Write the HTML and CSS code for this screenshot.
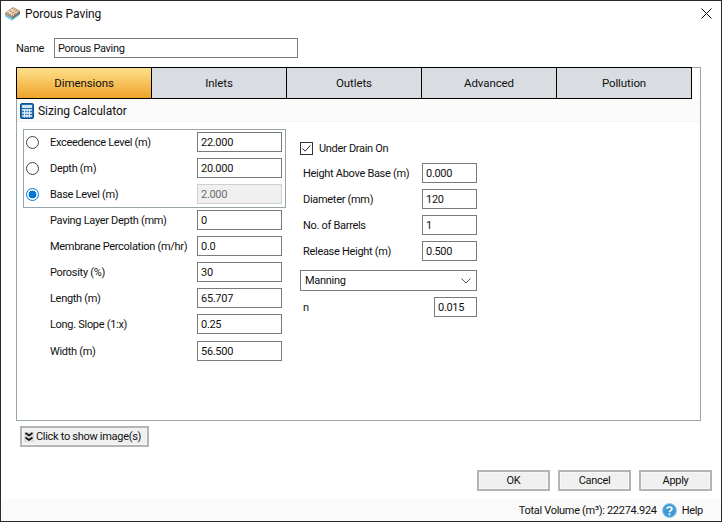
FILE: index.html
```html
<!DOCTYPE html>
<html lang="en">
<head>
<meta charset="utf-8">
<title>Porous Paving</title>
<link rel="stylesheet" href="styles.css">
</head>
<body>
<div class="window">
  <header class="titlebar">
    <svg class="app-icon" width="17" height="15" viewBox="0 0 17 15">
      <polygon points="1,8 8,12 16,6 16,9 8,14.5 1,10.5" fill="#6cc8ee"/>
      <polygon points="1,7 9,1 16,5 8,11" fill="#b98f66"/>
      <path d="M3,7 L10,2.5 M5,8 L12,3.5 M7,9.3 L14,4.8 M4,5.5 L10,9.5 M7,3.5 L13,7.5" stroke="#f1e4d2" stroke-width="1" fill="none"/>
      <polygon points="8,11 16,5 16,7.5 8,13" fill="#6f6a60"/>
      <polygon points="1,7 8,11 8,12 1,8" fill="#8a6a4a"/>
    </svg>
    <span class="title">Porous Paving</span>
    <svg class="close" width="11" height="11" viewBox="0 0 11 11"><path d="M0.5,0.5 L10.5,10.5 M10.5,0.5 L0.5,10.5" stroke="#111" stroke-width="1" fill="none"/></svg>
  </header>

  <div class="name-row">
    <span class="name-label">Name</span>
    <div class="field name-field">Porous Paving</div>
  </div>

  <section class="panel">
    <nav class="tabs">
      <div class="tab active">Dimensions</div>
      <div class="tab">Inlets</div>
      <div class="tab">Outlets</div>
      <div class="tab">Advanced</div>
      <div class="tab">Pollution</div>
    </nav>
    <div class="toolbar">
      <svg width="14" height="16" viewBox="0 0 14 16">
        <rect x="0.5" y="0.5" width="13" height="15" rx="1.5" fill="#1f6fb5" stroke="#134f87"/>
        <rect x="2" y="2" width="10" height="3" fill="#cfe4f5"/>
        <path d="M2,7 h10 M2,10 h10 M2,13 h10" stroke="#e6f1fa" stroke-width="1.4"/>
        <path d="M4.5,6 v8.5 M7,6 v8.5 M9.5,6 v8.5" stroke="#e6f1fa" stroke-width="1"/>
      </svg>
      <span>Sizing Calculator</span>
    </div>
    <div class="form">
      <div class="col-left">
        <div class="radio-box">
          <label class="row radio-row"><span class="radio"></span><span>Exceedence Level (m)</span><div class="field">22.000</div></label>
          <label class="row radio-row"><span class="radio"></span><span>Depth (m)</span><div class="field">20.000</div></label>
          <label class="row radio-row"><span class="radio checked"></span><span>Base Level (m)</span><div class="field disabled">2.000</div></label>
        </div>
        <div class="row plain-row"><span>Paving Layer Depth (mm)</span><div class="field">0</div></div>
        <div class="row plain-row"><span>Membrane Percolation (m/hr)</span><div class="field">0.0</div></div>
        <div class="row plain-row"><span>Porosity (%)</span><div class="field">30</div></div>
        <div class="row plain-row"><span>Length (m)</span><div class="field">65.707</div></div>
        <div class="row plain-row"><span>Long. Slope (1:x)</span><div class="field">0.25</div></div>
        <div class="row plain-row last"><span>Width (m)</span><div class="field">56.500</div></div>
      </div>
      <div class="col-right">
        <label class="check-row">
          <svg class="check" width="13" height="13" viewBox="0 0 13 13"><rect x="0.5" y="0.5" width="12" height="12" fill="#fff" stroke="#333"/><path d="M2.5,6.5 L5.2,9.2 L10.5,3.2" stroke="#333" stroke-width="1" fill="none"/></svg>
          <span>Under Drain On</span>
        </label>
        <div class="drain-row"><span>Height Above Base (m)</span><div class="field">0.000</div></div>
        <div class="drain-row"><span>Diameter (mm)</span><div class="field">120</div></div>
        <div class="drain-row"><span>No. of Barrels</span><div class="field">1</div></div>
        <div class="drain-row"><span>Release Height (m)</span><div class="field">0.500</div></div>
        <div class="select">
          <span>Manning</span>
          <svg width="10" height="6" viewBox="0 0 10 6"><path d="M0.5,0.5 L5,5 L9.5,0.5" stroke="#555" stroke-width="1" fill="none"/></svg>
        </div>
        <div class="n-row"><span>n</span><div class="field">0.015</div></div>
      </div>
    </div>
  </section>

  <div class="images-row">
    <button class="btn images-btn" type="button">
      <svg width="10" height="10" viewBox="0 0 10 10"><rect width="10" height="10" fill="#dcdcdc"/><path d="M1.5,1 L5,3.5 L8.5,1 M1.5,5.5 L5,8 L8.5,5.5" stroke="#111" stroke-width="1.7" fill="none"/></svg>
      <span>Click to show image(s)</span>
    </button>
  </div>

  <div class="actions">
    <button class="btn action" type="button">OK</button>
    <button class="btn action" type="button">Cancel</button>
    <button class="btn action" type="button">Apply</button>
  </div>

  <footer class="statusbar">
    <span>Total Volume (m³): 22274.924</span>
    <svg width="15" height="15" viewBox="0 0 15 15">
      <circle cx="7.5" cy="7.5" r="7" fill="#3f9bd6" stroke="#a5c9e4"/>
      <path d="M5,5.8 C5,3.4 10,3.4 10,5.8 C10,7.6 7.5,7.4 7.5,9.2" stroke="#fff" stroke-width="1.7" fill="none"/>
      <circle cx="7.5" cy="11.3" r="1" fill="#fff"/>
    </svg>
    <span>Help</span>
  </footer>
</div>
</body>
</html>
```
FILE: styles.css
```css
* { box-sizing: border-box; }
html, body { margin: 0; padding: 0; }
body {
  width: 722px;
  height: 522px;
  overflow: hidden;
  font-family: Roboto, "Liberation Sans", Arial, sans-serif;
  font-size: 11px;
  letter-spacing: -0.3px;
  color: #111;
  background: #fff;
}
.window {
  width: 722px;
  height: 522px;
  display: flex;
  flex-direction: column;
  background: #fff;
  border: 1px solid #2a2a2a;
}
.titlebar {
  height: 25px;
  flex: none;
  display: flex;
  align-items: center;
  padding: 0 9px 0 3px;
}
.app-icon { flex: none; }
.title { margin-left: 4px; font-size: 12px; letter-spacing: -0.05px; color: #111; }
.close { margin-left: auto; }
.name-row {
  flex: none;
  margin-top: 12px;
  display: flex;
  align-items: center;
  padding-left: 15px;
}
.name-label { width: 38px; }
.field {
  height: 20px;
  width: 85px;
  flex: none;
  display: flex;
  align-items: center;
  padding-left: 3px;
  background: #fff;
  border: 1px solid #7a7a7a;
  white-space: nowrap;
}
.name-field { width: 244px; }
.field.disabled { background: #f0f0f0; border-color: #cfcfcf; color: #6d6d6d; }
.panel {
  flex: none;
  height: 354px;
  width: 685px;
  margin: 9px 0 0 15px;
  border: 1px solid #98a4aa;
}
.tabs {
  display: flex;
  width: 676px;
  height: 32px;
  margin: -1px 0 0 -1px;
  border: 1px solid #000;
}
.tab {
  width: 135px;
  display: flex;
  align-items: center;
  justify-content: center;
  background: #d9dde1;
  border-right: 1px solid #000;
  font-size: 11.5px;
  letter-spacing: -0.1px;
}
.tab:last-child { width: 134px; border-right: 0; }
.tab.active { background: linear-gradient(#fde08c, #f0a42a); }
.toolbar {
  height: 23px;
  display: flex;
  align-items: center;
  gap: 4px;
  padding: 2px 0 0 3px;
  background: #fbfbfb;
  border-bottom: 1px solid #f4f4f4;
  font-size: 12px;
  letter-spacing: -0.05px;
}
.form {
  display: flex;
  gap: 14px;
  margin: 7px 0 0 6px;
}
.col-left { width: 263px; }
.col-right { width: 177px; padding-top: 13px; }
.radio-box {
  border: 1px solid #98a4aa;
  padding: 2px 0 3px;
  display: flex;
  flex-direction: column;
  gap: 6px;
  margin-bottom: 2px;
}
.row { display: grid; align-items: center; height: 20px; }
.radio-row { grid-template-columns: 13px 11px 147px 85px; padding-left: 2px; }
.radio-row > span:nth-child(2) { grid-column: 3; }
.plain-row { grid-template-columns: 147px 85px; padding-left: 27px; margin-bottom: 6px; }
.plain-row.last { margin-top: 7px; margin-bottom: 0; }
.radio {
  width: 13px;
  height: 13px;
  border-radius: 50%;
  border: 1px solid #444;
  background: #fff;
}
.radio.checked {
  border-color: #0078d7;
  background: radial-gradient(circle, #0078d7 0 3.6px, #fff 4.2px);
}
.check-row { display: flex; align-items: center; gap: 6px; height: 13px; margin-bottom: 8px; }
.check { flex: none; }
.drain-row {
  display: flex;
  justify-content: space-between;
  align-items: center;
  height: 20px;
  padding-left: 3px;
  margin-bottom: 6px;
}
.drain-row .field { width: 55px; }
.select {
  height: 21px;
  margin-top: 9px;
  display: flex;
  align-items: center;
  justify-content: space-between;
  padding: 0 5px 0 4px;
  border: 1px solid #7a7a7a;
  background: #fff;
}
.n-row {
  display: flex;
  justify-content: space-between;
  align-items: center;
  height: 20px;
  margin-top: 6px;
  padding-left: 3px;
}
.n-row .field { width: 43px; }
.btn {
  font: inherit;
  letter-spacing: inherit;
  color: #111;
  background: #f0f0f0;
  border: 2px solid #b4b4b4;
  box-shadow: inset 0 0 0 1px #f7f7f7;
  padding: 0;
  height: 21px;
}
.images-row { flex: none; margin: 5px 0 0 19px; display: flex; }
.images-btn {
  width: 129px;
  display: flex;
  align-items: center;
  gap: 2px;
  padding-left: 2px;
  white-space: nowrap;
}
.images-btn svg { flex: none; }
.actions {
  flex: none;
  display: flex;
  justify-content: flex-end;
  gap: 8px;
  margin-top: 23px;
  padding-right: 9px;
}
.action { width: 73px; }
.statusbar {
  flex: 1;
  margin-top: 8px;
  display: flex;
  justify-content: flex-end;
  align-items: center;
  gap: 5px;
  padding-right: 18px;
  background: #fafafa;
}
```
